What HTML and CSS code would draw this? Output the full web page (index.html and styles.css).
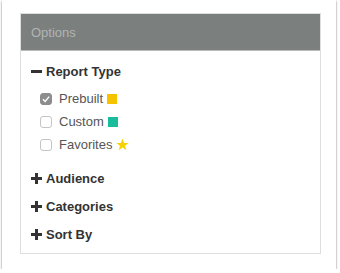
FILE: index.html
```html
<!DOCTYPE html>
<html lang="en">
<head>
    <meta charset="UTF-8">
    <title>Options</title>
    <link rel="stylesheet" href="styles.css">
</head>
<body>

    <div class="window">
        <!-- Options panel -->
        <div class="panel">
            <div class="panel-header">Options</div>
            <div class="panel-body">

                <div class="section">
                    <div class="section-title">
                        <svg class="toggle" width="11" height="11" viewBox="0 0 11 11"><rect x="0" y="4" width="11" height="3" fill="#333"/></svg>
                        Report Type
                    </div>
                    <div class="options">
                        <label class="option">
                            <span class="box checked">
                                <svg width="12" height="12" viewBox="0 0 12 12"><path d="M3 6.2 L5.1 8.4 L9.2 3.6" fill="none" stroke="#fff" stroke-width="1.4"/></svg>
                            </span>
                            Prebuilt <span class="swatch yellow"></span>
                        </label>
                        <label class="option">
                            <span class="box"></span>
                            Custom <span class="swatch teal"></span>
                        </label>
                        <label class="option">
                            <span class="box"></span>
                            Favorites
                            <svg class="star" width="13" height="13" viewBox="0 0 24 24"><polygon points="12,1 15,9 23.5,9 16.6,14.2 19.2,22.5 12,17.4 4.8,22.5 7.4,14.2 0.5,9 9,9" fill="#f8d200"/></svg>
                        </label>
                    </div>
                </div>

                <div class="section">
                    <div class="section-title">
                        <svg class="toggle" width="11" height="11" viewBox="0 0 11 11"><rect x="0" y="4" width="11" height="3" fill="#333"/><rect x="4" y="0" width="3" height="11" fill="#333"/></svg>
                        Audience
                    </div>
                </div>

                <div class="section">
                    <div class="section-title">
                        <svg class="toggle" width="11" height="11" viewBox="0 0 11 11"><rect x="0" y="4" width="11" height="3" fill="#333"/><rect x="4" y="0" width="3" height="11" fill="#333"/></svg>
                        Categories
                    </div>
                </div>

                <div class="section">
                    <div class="section-title">
                        <svg class="toggle" width="11" height="11" viewBox="0 0 11 11"><rect x="0" y="4" width="11" height="3" fill="#333"/><rect x="4" y="0" width="3" height="11" fill="#333"/></svg>
                        Sort By
                    </div>
                </div>

            </div>
        </div>
    </div>

</body>
</html>
```

FILE: styles.css
```css
body {
    font-family: "Liberation Sans", Arial, sans-serif;
    background-color: #fff;
    margin: 0;
    padding: 0;
}
/* Window frame */
.window {
    width: 334px;
    height: 269px;
    margin-left: 2px;
    padding: 13px 0 0 18px;
    box-sizing: border-box;
    background: #fff;
    box-shadow: 0 1px 2px rgba(0, 0, 0, 0.55);
}
/* Panel */
.panel {
    width: 301px;
    border: 1px solid #dedede;
    box-sizing: border-box;
}
.panel-header {
    height: 37px;
    line-height: 37px;
    background: #7b7f7e;
    color: #b1b5b4;
    font-size: 13px;
    padding-left: 10px;
    border-bottom: 1px solid #b9bbba;
    box-sizing: border-box;
}
.panel-body {
    padding: 10px 10px 9px 10px;
}
.section {
    margin-bottom: 8px;
}
.section:last-child {
    margin-bottom: 0;
}
.section-title {
    display: flex;
    align-items: center;
    gap: 4px;
    height: 20px;
    font-size: 13px;
    font-weight: bold;
    color: #333;
}
.options {
    margin-top: 6px;
    padding-bottom: 4px;
}
.option {
    display: flex;
    align-items: center;
    height: 23px;
    padding-left: 9px;
    font-size: 13px;
    color: #555;
}
.box {
    width: 12px;
    height: 12px;
    box-sizing: border-box;
    border: 1px solid #c4c4c4;
    border-radius: 3px;
    background: #fff;
    margin-right: 7px;
    display: flex;
}
.box.checked {
    background: #8d8d8d;
    border-color: #8d8d8d;
}
.box svg {
    margin: -1px;
}
.swatch {
    width: 10px;
    height: 10px;
    margin-left: 4px;
}
.yellow {
    background: #f5c300;
}
.teal {
    background: #1abc9c;
}
.star {
    margin-left: 4px;
}
```
